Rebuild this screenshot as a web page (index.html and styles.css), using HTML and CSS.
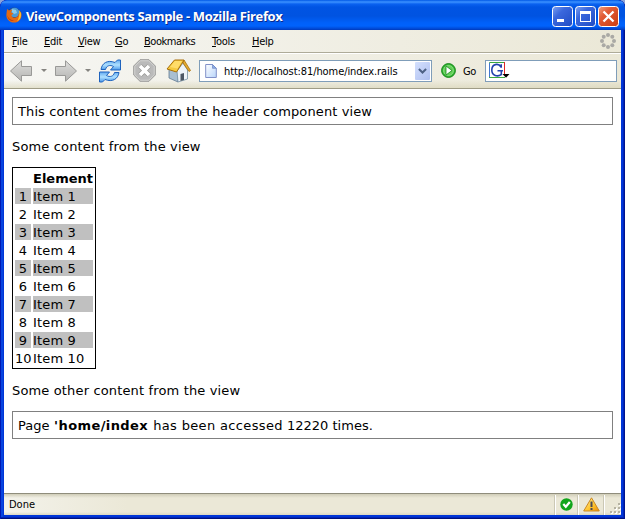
FILE: index.html
```
<!DOCTYPE html>
<html lang="en">
<head>
<meta charset="utf-8">
<title>ViewComponents Sample - Mozilla Firefox</title>
<link rel="stylesheet" href="styles.css">
</head>
<body>
<div class="window">
  <header class="titlebar">
    <svg class="fox" width="16" height="16" viewBox="0 0 16 16">
      <circle cx="8" cy="7.5" r="7" fill="#1c3f86"/>
      <circle cx="8.5" cy="5.5" r="4.8" fill="#4b9bd6"/>
      <path d="M6 2l4 1 1 3-3 1-2-2z" fill="#8dcbe9"/>
      <path d="M1 2L3 3.500c1-.8 2-.8 3-.3L5 5.300l2.500 1.500-2 1.200c0 2 2 3 4 2.500 2-.5 3-2 3-4l.8.500V3l2 3c1 5-2 9.500-7 9.500S.3 12 .4 8C.5 5.500 1 4 1 2z" fill="#e66a12"/>
      <path d="M13 3l1.800 3c.7 4-1 7-3.800 8.500C13 11 14 8 13 3z" fill="#ffc629"/>
      <path d="M1.500 8c.5 3 3 5.500 7 5.500-3 1.500-7-1-7-5.500z" fill="#b93a0b"/>
    </svg>
    <span class="title">ViewComponents Sample - Mozilla Firefox</span>
    <div class="controls">
      <svg class="ctl" width="21" height="21" viewBox="0 0 21 21"><rect x=".5" y=".5" width="20" height="20" rx="3" fill="url(#bl)" stroke="#fff"/><path d="M5 13h7v3H5z" fill="#fff"/>
        <defs><linearGradient id="bl" x1="0" y1="0" x2="1" y2="1"><stop offset="0" stop-color="#7fa2f0"/><stop offset=".35" stop-color="#3b68dd"/><stop offset="1" stop-color="#1f4bc4"/></linearGradient>
        <linearGradient id="rd" x1="0" y1="0" x2="1" y2="1"><stop offset="0" stop-color="#f0a080"/><stop offset=".35" stop-color="#e25b35"/><stop offset="1" stop-color="#c83c10"/></linearGradient></defs></svg>
      <svg class="ctl" width="21" height="21" viewBox="0 0 21 21"><rect x=".5" y=".5" width="20" height="20" rx="3" fill="url(#bl)" stroke="#fff"/><path d="M5 5h11v11H5zM6 8v7h9V8z" fill="#fff" fill-rule="evenodd"/></svg>
      <svg class="ctl" width="21" height="21" viewBox="0 0 21 21"><rect x=".5" y=".5" width="20" height="20" rx="3" fill="url(#rd)" stroke="#fff"/><path d="M5.500 5.500l10 10m0-10l-10 10" stroke="#fff" stroke-width="2.300"/></svg>
    </div>
  </header>

  <nav class="menubar">
    <span class="m-file"><u>F</u>ile</span>
    <span class="m-edit"><u>E</u>dit</span>
    <span class="m-view"><u>V</u>iew</span>
    <span class="m-go"><u>G</u>o</span>
    <span class="m-book"><u>B</u>ookmarks</span>
    <span class="m-tools"><u>T</u>ools</span>
    <span class="m-help"><u>H</u>elp</span>
    <svg class="throbber" width="16" height="16" viewBox="0 0 16 16" fill="#aaa9a5">
      <circle cx="8" cy="2" r="2"/><circle cx="12.300" cy="3.700" r="2"/><circle cx="14" cy="8" r="2"/><circle cx="12.300" cy="12.300" r="2"/><circle cx="8" cy="14" r="2"/><circle cx="3.700" cy="12.300" r="2"/><circle cx="2" cy="8" r="2"/><circle cx="3.700" cy="3.700" r="2"/>
    </svg>
  </nav>

  <div class="toolbar">
    <svg class="back" width="24" height="24" viewBox="0 0 24 24">
      <defs><linearGradient id="gr" x1="0" y1="0" x2="0" y2="1"><stop offset="0" stop-color="#dededc"/><stop offset="1" stop-color="#b4b4b2"/></linearGradient></defs>
      <path d="M1.500 12L12.500 1.800V7.500H22.500v9H12.500v5.700z" fill="url(#gr)" stroke="#999997" stroke-linejoin="round"/>
    </svg>
    <i class="drop"></i>
    <svg class="forward" width="24" height="24" viewBox="0 0 24 24"><path d="M22.500 12L11.500 1.800V7.500H1.500v9h10v5.700z" fill="url(#gr)" stroke="#999997" stroke-linejoin="round"/></svg>
    <i class="drop"></i>
    <svg class="reload" width="24" height="24" viewBox="0 0 24 24">
      <defs><linearGradient id="rl" x1="0" y1="0" x2="0" y2="1"><stop offset="0" stop-color="#62aaf0"/><stop offset=".5" stop-color="#aee0ff"/><stop offset="1" stop-color="#4a98ea"/></linearGradient></defs>
      <g fill="url(#rl)" stroke="#1f63bd" stroke-linejoin="round">
        <path d="M3 10.500C4 4 9.500.5 17 3.500L19.500 1h3v10H12.500l3-3.500C12 5.500 8.500 6.500 7.500 10.500z"/>
        <path d="M21 13.500c-1 6.500-6.500 10-14 7L4.500 23h-3V13h10l-3 3.500c3.500 2 7 1 8-3z"/>
      </g>
    </svg>
    <svg class="stop" width="23" height="23" viewBox="0 0 23 23">
      <path d="M7 .7h9L22.300 7v9L16 22.300H7L.7 16V7z" fill="#bababa" stroke="#9c9c9a"/>
      <path d="M7.300 1.800h8.400l5.500 5.500v8.400l-5.500 5.500H7.300l-5.500-5.500V7.300z" fill="none" stroke="#d2d2d0"/>
      <path d="M7 7l9 9m0-9l-9 9" stroke="#969694" stroke-width="5"/><path d="M7 7l9 9m0-9l-9 9" stroke="#fff" stroke-width="3.600"/>
    </svg>
    <svg class="home" width="25" height="24" viewBox="0 0 25 24">
      <path d="M3 10v9l9 4V12z" fill="#a9bfd2" stroke="#627b92" stroke-width=".8"/>
      <path d="M12 23l9.500-3v-9L17 4l-6 8z" fill="#edf3f8" stroke="#7590a5" stroke-width=".8"/>
      <path d="M14.500 22v-7l3.500-1v7z" fill="#4c5764"/>
      <path d="M8.500 1H18l-7.500 12L1 10z" fill="#f5c93e" stroke="#a86e0a"/>
      <path d="M9 2h7l-4.500 7.500L4 8z" fill="#ffdc69"/>
      <path d="M18 1l6.500 10.500-1.500 1L17 4z" fill="#e5ad30" stroke="#a86e0a" stroke-width=".8"/>
    </svg>
    <div class="urlbar">
      <svg width="12" height="14" viewBox="0 0 12 14"><defs><linearGradient id="pg" x1="0" y1="0" x2="1" y2="1"><stop offset="0" stop-color="#fff"/><stop offset="1" stop-color="#b9d5fa"/></linearGradient></defs><path d="M.7.5h6.800l3.800 3.800v9.200H.7z" fill="url(#pg)" stroke="#8190c8"/><path d="M7.500.5v3.800h3.800z" fill="#8fafe7" stroke="#6e86c4" stroke-width=".7"/></svg>
      <span class="url">http://localhost:81/home/index.rails</span>
      <span class="combo"><svg width="9" height="6" viewBox="0 0 9 6"><path d="M.9 1l3.600 3.500L8.100 1" fill="none" stroke="#4d6185" stroke-width="2"/></svg></span>
    </div>
    <svg class="goicon" width="15" height="15" viewBox="0 0 15 15"><circle cx="7.500" cy="7.500" r="6.900" fill="#35b735" stroke="#168519"/><circle cx="7.500" cy="7.500" r="5" fill="#63cf58" stroke="#9be792" stroke-width=".7"/><path d="M5 3v9l6-4.500z" fill="#fff" stroke="#168519" stroke-width=".8"/></svg>
    <span class="golabel">Go</span>
    <div class="search">
      <svg width="21" height="17" viewBox="0 0 21 17"><path d="M.5 16V.5H15" fill="none" stroke="#39a93e"/><path d="M15.500 0v12" stroke="#e02828"/><path d="M0 15.500h16" stroke="#39a93e"/><path d="M.5 1v14" stroke="#4177d0"/><path d="M12.200 5.800V2.200M12 5C9.500.8 2.800 1.800 2.800 8c0 6 6 7 9.500 4.500V8.800H8.500m3.800 0h1.700" fill="none" stroke="#2343ae" stroke-width="1.600"/><path d="M13.500 12h7L17 15.700z" fill="#000"/></svg>
    </div>
  </div>

  <main class="page">
    <div class="box top"><span class="t-head">This content comes from the header component view</span></div>
    <p class="before">Some content from the view</p>
    <table>
      <tr><th></th><th>Element</th></tr>
      <tr class="odd"><td>1</td><td>Item 1</td></tr>
      <tr><td>2</td><td>Item 2</td></tr>
      <tr class="odd"><td>3</td><td>Item 3</td></tr>
      <tr><td>4</td><td>Item 4</td></tr>
      <tr class="odd"><td>5</td><td>Item 5</td></tr>
      <tr><td>6</td><td>Item 6</td></tr>
      <tr class="odd"><td>7</td><td>Item 7</td></tr>
      <tr><td>8</td><td>Item 8</td></tr>
      <tr class="odd"><td>9</td><td>Item 9</td></tr>
      <tr><td>10</td><td>Item 10</td></tr>
    </table>
    <p class="after">Some other content from the view</p>
    <div class="box bottom"><span>Page <b>'home/index</b> <span class="visits">has been accessed</span> 12220 times.</span></div>
  </main>

  <footer class="status">
    <span class="done">Done</span>
    <span class="cell"><svg width="13" height="13" viewBox="0 0 13 13"><circle cx="6.500" cy="6.500" r="6.200" fill="#12a51c"/><path d="M3.300 6l2.500 2.800 4-4.800" fill="none" stroke="#fff" stroke-width="2.200"/></svg></span>
    <span class="cell warn"><svg width="17" height="15" viewBox="0 0 17 15"><defs><linearGradient id="wn" x1="0" y1="0" x2="1" y2="1"><stop offset="0" stop-color="#fff1a0"/><stop offset=".6" stop-color="#ffc42d"/><stop offset="1" stop-color="#e68a0c"/></linearGradient></defs><path d="M8.500.8L16.300 14H.7z" fill="url(#wn)" stroke="#c98722" stroke-linejoin="round"/><path d="M7.500 4.500h2V10h-2zM7.500 11h2v2h-2z" fill="#4b4a55"/></svg></span>
    <span class="cell grip"><svg width="11" height="11" viewBox="0 0 11 11"><g fill="#fff"><path d="M9 1h2v2H9zM5 5h2v2H5zM9 5h2v2H9zM1 9h2v2H1zM5 9h2v2H5zM9 9h2v2H9z"/></g><g fill="#b5b2a1"><path d="M8 0h2v2H8zM4 4h2v2H4zM8 4h2v2H8zM0 8h2v2H0zM4 8h2v2H4zM8 8h2v2H8z"/></g></svg></span>
  </footer>
</div>
</body>
</html>
```
FILE: styles.css
```
* { box-sizing: border-box; }
body { margin: 0; background: #8ba3d9; color: #000; overflow: hidden; }
svg { display: block; flex: none; }
.window {
  width: 625px; height: 519px;
  display: flex; flex-direction: column;
  padding: 0 4px 4px;
  border-radius: 7px 7px 0 0;
  background: #0036d8;
  box-shadow: inset 1px 0 #0019b4, inset -1px 0 #001590, inset 0 -1px #00117c, inset -2px 0 #0024b8, inset 0 -2px #0024b8, inset 3px 0 #0844df;
  font-family: "DejaVu Sans Condensed", "DejaVu Sans", sans-serif;
  font-size: 11px;
  overflow: hidden;
}
.titlebar {
  flex: none; height: 30px; margin: 0 -4px; padding: 3px 6px 0 6px;
  display: flex; align-items: center;
  border-radius: 7px 7px 0 0;
  background: linear-gradient(#0058e6 0, #3c92ff 2px, #0a62f0 4px, #0054e3 7px, #0053e1 16px, #0061fa 23px, #0062fc 26px, #0046d0 29px, #0038b8 30px);
}
.fox { margin-top: -4px; }
.title {
  margin-left: 4px; margin-top: -1px; color: #fff; white-space: nowrap;
  font: bold 13px "Open Sans", sans-serif; letter-spacing: -0.36px;
  text-shadow: 1px 1px #0a2a8c;
}
.controls { margin-left: auto; display: flex; gap: 2px; }
.menubar, .toolbar, .status { background: linear-gradient(90deg, #f6f6f3, #ebe8d7); white-space: nowrap; }
.menubar {
  flex: none; height: 24px; display: flex; align-items: center;
  border-bottom: 1px solid #fff; padding: 0 5px 2px 8px;
  box-shadow: inset 0 -1px #aeab99;
}
.menubar span { flex: none; padding-top: 1px; letter-spacing: -0.25px; }
.menubar .m-book { letter-spacing: -0.45px; }
.menubar u { text-underline-offset: 1px; }
.m-file { width: 32px; } .m-edit { width: 34px; } .m-view { width: 37px; } .m-go { width: 29px; }
.m-book { width: 68px; } .m-tools { width: 40px; }
.throbber { margin-left: auto; }
.toolbar {
  flex: none; height: 35px; display: flex; align-items: center;
  padding: 0 4px 1px 5px;
  background: linear-gradient(rgba(225,223,200,0) 26px, rgba(214,210,180,.6)), linear-gradient(90deg, #f6f6f3, #ebe8d7);
  border-bottom: 1px solid #9f9c86;
}
.drop { flex: none; border: 3px solid transparent; border-top-color: #858480; border-bottom: 0; }
.back { margin-right: 8px; }
.forward { margin: 0 7px; }
.reload { margin: 0 11px 0 7px; }
.home { margin: 0 8px 0 10px; }
.urlbar, .search { flex: none; height: 22px; background: #fff; border: 1px solid #7f9db9; display: flex; align-items: center; }
.urlbar { width: 233px; padding: 0 1px 0 5px; }
.url { margin: 2px 0 0 7px; letter-spacing: -0.08px; }
.combo {
  margin-left: auto; width: 15px; height: 18px; border-radius: 1px;
  background: linear-gradient(135deg, #d4e0fd, #aebff0);
  display: flex; align-items: center; justify-content: center;
}
.goicon { margin: 0 7px 0 9px; }
.golabel { width: 22px; padding-top: 2px; letter-spacing: -0.3px; }
.search { width: 132px; padding-left: 3px; }
.page {
  flex: 1; background: #fff; padding: 8px 8px 0;
  font-family: "DejaVu Sans", sans-serif; font-size: 13px; line-height: 16px; letter-spacing: 0.15px;
}
.box { border: 1px solid #808080; height: 28px; padding: 6px 5px 0; white-space: nowrap; }
.box.top { padding-left: 5px; letter-spacing: 0.11px; }
.box.bottom { letter-spacing: 0; }
.box.bottom b { letter-spacing: 0.4px; margin-left: 0.5px; }
.visits { letter-spacing: 0.35px; margin-left: 1px; }
p { margin: 0; white-space: nowrap; }
.before { margin: 14px 0 12px; }
.after { margin: 14px 0 12px; }
table { border: 1px solid #000; border-spacing: 2px; width: 84px; table-layout: fixed; }
th, td { padding: 2px 0 0; height: 16px; line-height: 14px; white-space: nowrap; }
th { letter-spacing: 0; }
tr > :first-child { width: 16px; text-align: center; letter-spacing: 0; }
tr > :last-child { width: 60px; text-align: left; }
.odd td { background: #c0c0c0; }
.status {
  flex: none; height: 22px; display: flex; align-items: stretch;
  border-top: 1px solid #8f8d7c;
  background: linear-gradient(#d0cdb8, rgba(235,232,215,0) 4px, rgba(235,232,215,0) 18px, #dad7c3), linear-gradient(90deg, #f3f2ea, #ebe8d7 20%);
}
.done { flex: 1; padding: 4px 5px; line-height: 13px; }
.cell { flex: none; width: 23px; margin-top: 1px; padding: 0 1px 1px 0; border-left: 1px solid #fff; box-shadow: -1px 0 #cbc8b5; display: flex; align-items: center; justify-content: center; }
.cell.warn { width: 26px; }
.cell.grip { width: 17px; align-items: flex-end; justify-content: flex-end; padding: 0 0 1px; }
```
